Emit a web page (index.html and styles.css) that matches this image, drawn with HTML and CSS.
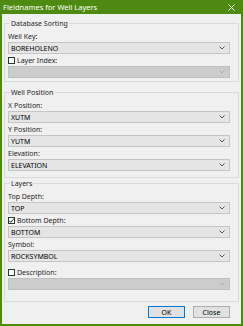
FILE: index.html
```html
<!DOCTYPE html>
<html lang="en">
<head>
    <meta charset="UTF-8">
    <title>Fieldnames for Well Layers</title>
    <link rel="stylesheet" href="styles.css">
</head>
<body>
    <div class="window">
        <div class="titlebar">
            <span class="title">Fieldnames for Well Layers</span>
            <svg class="close" width="7" height="7" viewBox="0 0 7 7"><path d="M0.5 0.5L6.5 6.5M6.5 0.5L0.5 6.5" stroke="#fff" stroke-width="1"/></svg>
        </div>
        <div class="client">
            <fieldset class="group g1">
                <legend>Database Sorting</legend>
                <div class="field">
                    <label class="lbl">Well Key:</label>
                    <div class="combo"><span>BOREHOLENO</span><svg width="6" height="4" viewBox="0 0 6 4"><path d="M0.5 0.5L3 3L5.5 0.5" fill="none" stroke="#555"/></svg></div>
                </div>
                <div class="field">
                    <label class="lbl check"><span class="box"></span>Layer Index:</label>
                    <div class="combo disabled"><span></span><svg width="6" height="4" viewBox="0 0 6 4"><path d="M0.5 0.5L3 3L5.5 0.5" fill="none" stroke="#aaa"/></svg></div>
                </div>
            </fieldset>

            <fieldset class="group g2">
                <legend>Well Position</legend>
                <div class="field">
                    <label class="lbl">X Position:</label>
                    <div class="combo"><span>XUTM</span><svg width="6" height="4" viewBox="0 0 6 4"><path d="M0.5 0.5L3 3L5.5 0.5" fill="none" stroke="#555"/></svg></div>
                </div>
                <div class="field">
                    <label class="lbl">Y Position:</label>
                    <div class="combo"><span>YUTM</span><svg width="6" height="4" viewBox="0 0 6 4"><path d="M0.5 0.5L3 3L5.5 0.5" fill="none" stroke="#555"/></svg></div>
                </div>
                <div class="field">
                    <label class="lbl">Elevation:</label>
                    <div class="combo"><span>ELEVATION</span><svg width="6" height="4" viewBox="0 0 6 4"><path d="M0.5 0.5L3 3L5.5 0.5" fill="none" stroke="#555"/></svg></div>
                </div>
            </fieldset>

            <fieldset class="group g3">
                <legend>Layers</legend>
                <div class="field">
                    <label class="lbl">Top Depth:</label>
                    <div class="combo"><span>TOP</span><svg width="6" height="4" viewBox="0 0 6 4"><path d="M0.5 0.5L3 3L5.5 0.5" fill="none" stroke="#555"/></svg></div>
                </div>
                <div class="field">
                    <label class="lbl check"><span class="box checked"><svg width="7" height="7" viewBox="0 0 7 7"><path d="M1 3.5L2.8 5.3L6 1.5" fill="none" stroke="#222" stroke-width="1"/></svg></span>Bottom Depth:</label>
                    <div class="combo"><span>BOTTOM</span><svg width="6" height="4" viewBox="0 0 6 4"><path d="M0.5 0.5L3 3L5.5 0.5" fill="none" stroke="#555"/></svg></div>
                </div>
                <div class="field">
                    <label class="lbl">Symbol:</label>
                    <div class="combo"><span>ROCKSYMBOL</span><svg width="6" height="4" viewBox="0 0 6 4"><path d="M0.5 0.5L3 3L5.5 0.5" fill="none" stroke="#555"/></svg></div>
                </div>
                <div class="field spaced">
                    <label class="lbl check"><span class="box"></span>Description:</label>
                    <div class="combo disabled"><span></span><svg width="6" height="4" viewBox="0 0 6 4"><path d="M0.5 0.5L3 3L5.5 0.5" fill="none" stroke="#aaa"/></svg></div>
                </div>
            </fieldset>

            <div class="buttons">
                <button class="btn default">OK</button>
                <button class="btn">Close</button>
            </div>
        </div>
    </div>
</body>
</html>
```

FILE: styles.css
```css
html, body {
    margin: 0;
}
body {
    width: 243px;
    height: 326px;
    overflow: hidden;
    font-family: "Noto Sans", "Open Sans", sans-serif;
    font-size: 7px;
    color: #1e1e1e;
}
.window {
    box-sizing: border-box;
    height: 326px;
    background: #4e8a10;
    padding: 0 2px 2px;
    display: flex;
    flex-direction: column;
}
.titlebar {
    height: 14px;
    display: flex;
    align-items: center;
    justify-content: space-between;
    padding: 0 6px 0 1px;
    color: #fff;
    font-size: 7.5px;
}
.client {
    flex: 1;
    background: #f0f0f0;
    padding-top: 5px;
    display: flex;
    flex-direction: column;
}
.group {
    margin: 0 2px;
    padding: 3px 8px 3px 3px;
    border: 1px solid #d9d9d9;
    min-width: 0;
}
.group legend {
    padding: 0 1px;
    margin-left: 2px;
    line-height: 9px;
}
.g2 {
    margin-top: 6px;
    padding-bottom: 6px;
}
.g3 {
    margin-top: 1px;
    padding-bottom: 11px;
}
.field {
    margin-bottom: 1px;
}
.field:last-child {
    margin-bottom: 0;
}
.field.spaced {
    margin-top: 5px;
}
.lbl {
    display: flex;
    align-items: center;
    height: 11px;
    line-height: 11px;
}
.box {
    box-sizing: border-box;
    width: 7px;
    height: 7px;
    border: 1px solid #333;
    background: #fff;
    margin-right: 2px;
    display: flex;
    align-items: center;
    justify-content: center;
}
.box svg {
    flex: none;
}
.combo {
    box-sizing: border-box;
    height: 12px;
    background: #e5e5e5;
    border: 1px solid #c4c4c4;
    padding: 0 4px 0 2px;
    display: flex;
    align-items: center;
    justify-content: space-between;
    color: #000;
}
.combo.disabled {
    background: #cccccc;
    border-color: #bfbfbf;
}
.buttons {
    display: flex;
    justify-content: flex-end;
    gap: 8px;
    margin-top: 4px;
    padding-right: 11px;
}
.btn {
    box-sizing: border-box;
    width: 37px;
    height: 12px;
    padding: 0;
    font-family: inherit;
    font-size: 7px;
    color: #000;
    background: #e1e1e1;
    border: 1px solid #adadad;
}
.btn.default {
    border-color: #0078d7;
}
```
